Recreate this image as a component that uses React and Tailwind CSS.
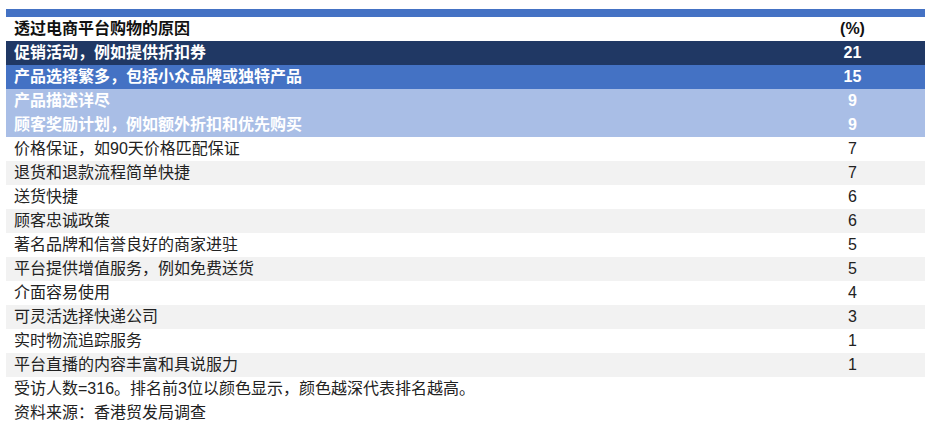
import React from 'react'

const rows = [
  { label: '促销活动，例如提供折扣券', value: 21, tone: 'dark' },
  { label: '产品选择繁多，包括小众品牌或独特产品', value: 15, tone: 'mid' },
  { label: '产品描述详尽', value: 9, tone: 'light' },
  { label: '顾客奖励计划，例如额外折扣和优先购买', value: 9, tone: 'light' },
  { label: '价格保证，如90天价格匹配保证', value: 7 },
  { label: '退货和退款流程简单快捷', value: 7 },
  { label: '送货快捷', value: 6 },
  { label: '顾客忠诚政策', value: 6 },
  { label: '著名品牌和信誉良好的商家进驻', value: 5 },
  { label: '平台提供增值服务，例如免费送货', value: 5 },
  { label: '介面容易使用', value: 4 },
  { label: '可灵活选择快递公司', value: 3 },
  { label: '实时物流追踪服务', value: 1 },
  { label: '平台直播的内容丰富和具说服力', value: 1 },
]

function rowClass(tone, i) {
  if (tone === 'dark') return 'bg-[#203864] text-white font-bold'
  if (tone === 'mid') return 'bg-[#4472c4] text-white font-bold'
  if (tone === 'light') return 'bg-[#a9bee6] text-white font-bold'
  return i % 2 === 1 ? 'bg-[#f2f2f2] text-[#222]' : 'bg-white text-[#222]'
}

export default function App() {
  return (
    <div
      className="w-[936px] h-[432px] bg-white pt-[9px] pl-[6px] text-[16px] leading-[24px]"
      style={{ fontFamily: '"Liberation Sans", Arial, "Noto Sans CJK SC", sans-serif' }}
    >
      <div className="w-[919px]">
        <div className="h-[8px] bg-[#4472c4]" />
        <div className="flex h-[24px] font-bold text-[#111]">
          <div className="flex-1 pl-[8px]">透过电商平台购物的原因</div>
          <div className="w-[145px] text-center">(%)</div>
        </div>
        {rows.map((r, i) => (
          <div key={i} className={`flex h-[24px] ${rowClass(r.tone, i)}`}>
            <div className="flex-1 pl-[8px]">{r.label}</div>
            <div className="w-[145px] text-center">{r.value}</div>
          </div>
        ))}
        <div className="pl-[8px] text-[#222]">
          <div className="h-[24px]">受访人数=316。排名前3位以颜色显示，颜色越深代表排名越高。</div>
          <div className="h-[24px]">资料来源：香港贸发局调查</div>
        </div>
      </div>
    </div>
  )
}
